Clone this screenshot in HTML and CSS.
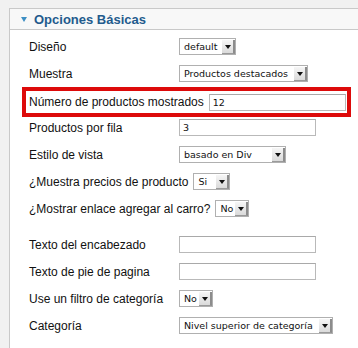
FILE: index.html
```html
<!DOCTYPE html>
<html lang="es">
<head>
    <meta charset="UTF-8">
    <title>Opciones Básicas</title>
    <link rel="stylesheet" href="styles.css">
</head>
<body>
    <div class="panel">
        <h3 class="panel-title"><span class="toggle"></span>Opciones Básicas</h3>
        <div class="fields">
            <div class="row">
                <span class="label">Diseño</span>
                <span class="select sel-layout"><span class="value">default</span><span class="arrow"></span></span>
            </div>
            <div class="row">
                <span class="label">Muestra</span>
                <span class="select sel-show"><span class="value">Productos destacados</span><span class="arrow"></span></span>
            </div>
            <div class="row marked">
                <span class="label">Número de productos mostrados</span>
                <input class="input" type="text" value="12">
            </div>
            <div class="row">
                <span class="label">Productos por fila</span>
                <input class="input" type="text" value="3">
            </div>
            <div class="row">
                <span class="label">Estilo de vista</span>
                <span class="select sel-view"><span class="value">basado en Div</span><span class="arrow"></span></span>
            </div>
            <div class="row">
                <span class="label">¿Muestra precios de producto</span>
                <span class="select sel-yes"><span class="value">Si</span><span class="arrow"></span></span>
            </div>
            <div class="row">
                <span class="label">¿Mostrar enlace agregar al carro?</span>
                <span class="select sel-no"><span class="value">No</span><span class="arrow"></span></span>
            </div>
            <div class="spacer"></div>
            <div class="row">
                <span class="label">Texto del encabezado</span>
                <input class="input" type="text" value="">
            </div>
            <div class="row">
                <span class="label">Texto de pie de pagina</span>
                <input class="input" type="text" value="">
            </div>
            <div class="row">
                <span class="label">Use un filtro de categoría</span>
                <span class="select sel-no"><span class="value">No</span><span class="arrow"></span></span>
            </div>
            <div class="row">
                <span class="label">Categoría</span>
                <span class="select sel-category"><span class="value">Nivel superior de categoría</span><span class="arrow"></span></span>
            </div>
        </div>
    </div>
</body>
</html>
```

FILE: styles.css
```css
body {
    margin: 0;
    background-color: #f1f1f1;
    font-family: "Liberation Sans", Arial, sans-serif;
    font-size: 12px;
    color: #111;
}
.panel {
    margin: 8px 0 0 9px;
    height: 340px;
    background-color: #fff;
    border-left: 1px solid #c9c9c9;
    border-top: 1px solid #c9c9c9;
}
.panel-title {
    margin: 0;
    height: 20px;
    display: flex;
    align-items: center;
    padding-left: 11px;
    background-color: #f8f8f8;
    border-bottom: 1px solid #c9c9c9;
    font-size: 13px;
    color: #235b8d;
}
.toggle {
    width: 0;
    height: 0;
    margin-right: 7px;
    border-left: 3.5px solid transparent;
    border-right: 3.5px solid transparent;
    border-top: 5px solid #3d8fc4;
}
.fields {
    padding: 3px 0 0 19px;
}
.row {
    display: flex;
    align-items: center;
    height: 27px;
}
.row.marked {
    width: 318px;
    height: 22px;
    margin: 0 0 -3px -7px;
    padding-left: 3px;
    border: 4px solid #dd0a0a;
}
.label {
    min-width: 145px;
    margin-right: 5px;
    white-space: nowrap;
}
.spacer {
    height: 9px;
}
.input {
    width: 137px;
    height: 17px;
    box-sizing: border-box;
    margin: 0;
    padding: 0 3px;
    border: 1px solid #b9b9b9;
    border-top-color: #a9a9a9;
    font-family: "DejaVu Sans", Verdana, sans-serif;
    font-size: 9.5px;
    color: #111;
    outline: none;
}
.select {
    display: inline-flex;
    height: 17px;
    box-sizing: border-box;
    border: 1px solid #b0b0b0;
    background-color: #fff;
    font-family: "DejaVu Sans", Verdana, sans-serif;
    font-size: 9.5px;
    color: #111;
}
.select .value {
    flex: 1;
    padding-left: 4px;
    line-height: 15px;
    white-space: nowrap;
}
.select .arrow {
    width: 11px;
    margin: 1px 0 0;
    display: flex;
    align-items: center;
    justify-content: center;
    background: linear-gradient(#f6f6f6, #dadada);
    border-right: 2px solid #8c8c8c;
    border-bottom: 1px solid #9a9a9a;
}
.select .arrow::after {
    content: "";
    border-left: 3px solid transparent;
    border-right: 3px solid transparent;
    border-top: 4px solid #111;
}
.sel-layout { width: 57px; }
.sel-show { width: 129px; }
.sel-view { width: 107px; }
.sel-yes { width: 37px; }
.sel-no { width: 34px; }
.sel-category { width: 154px; }
```
